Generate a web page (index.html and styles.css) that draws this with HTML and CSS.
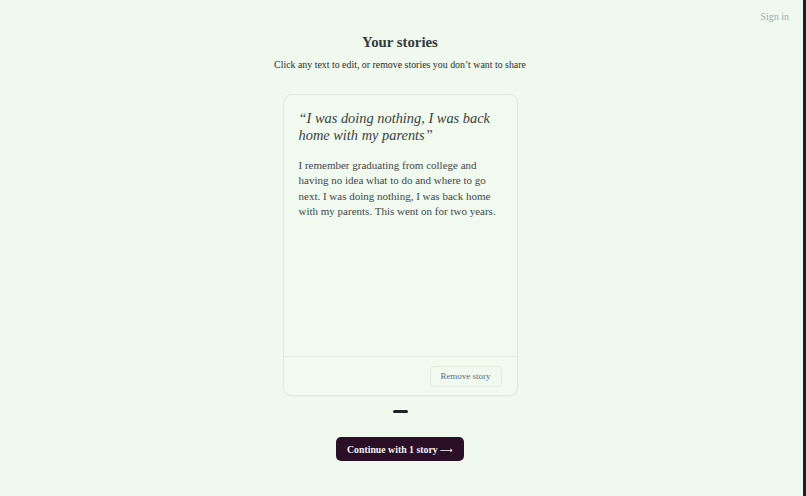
FILE: index.html
```html
<!DOCTYPE html>
<html lang="en">
<head>
<meta charset="utf-8">
<title>Your stories</title>
<link rel="stylesheet" href="styles.css">
</head>
<body>
<div class="page">
  <header class="topbar">
    <a class="signin" href="#">Sign in</a>
  </header>
  <main class="main">
    <h1 class="title">Your stories</h1>
    <p class="subtitle">Click any text to edit, or remove stories you don’t want to share</p>
    <section class="card">
      <div class="card-body">
        <h2 class="quote">“I was doing nothing, I was back home with my parents”</h2>
        <p class="story">I remember graduating from college and having no idea what to do and where to go next. I was doing nothing, I was back home with my parents. This went on for two years.</p>
      </div>
      <div class="card-footer">
        <button class="remove">Remove story</button>
      </div>
    </section>
    <div class="dots"><span class="dot"></span></div>
    <button class="continue">Continue with 1 story <span class="arrow">⟶</span></button>
  </main>
</div>
</body>
</html>
```
FILE: styles.css
```css
* { box-sizing: border-box; }
html, body { margin: 0; padding: 0; }
body {
  background: #eff9ee;
  font-family: "Liberation Serif", "DejaVu Serif", serif;
  color: #2f3437;
  height: 496px;
  overflow: hidden;
}
.page {
  height: 496px;
  border-right: 3px solid #1c1f2e;
  display: flex;
  flex-direction: column;
}
.topbar {
  display: flex;
  justify-content: flex-end;
  padding: 11px 14px 0 0;
  height: 26px;
}
.signin {
  font-size: 10px;
  color: #a0abbf;
  text-decoration: none;
}
.main {
  display: flex;
  flex-direction: column;
  align-items: center;
  padding-right: 3px;
}
.title {
  margin: 8px 0 0;
  font-size: 14.8px;
  font-weight: 700;
  color: #343b3b;
}
.subtitle {
  margin: 8px 0 0;
  font-size: 9.9px;
  color: #2b2f31;
}
.card {
  margin-top: 24px;
  width: 235px;
  height: 302px;
  border: 1px solid #e0eadf;
  border-radius: 9px;
  background: #f0faef;
  display: flex;
  flex-direction: column;
  box-shadow: 0 1px 2px rgba(0,0,0,0.03);
}
.card-body {
  flex: 1;
  padding: 15px 15px;
}
.quote {
  margin: 0;
  font-style: italic;
  font-weight: 400;
  font-size: 14.4px;
  line-height: 17px;
  color: #3a3f42;
}
.story {
  margin: 14px 0 0;
  font-size: 11px;
  line-height: 15.3px;
  color: #43484b;
}
.card-footer {
  border-top: 1px solid #e3ece2;
  height: 39px;
  display: flex;
  justify-content: flex-end;
  align-items: center;
  padding-right: 15px;
}
.remove {
  font-family: inherit;
  font-size: 9px;
  color: #5b6b87;
  background: transparent;
  border: 1px solid #e2ebe2;
  border-radius: 4px;
  height: 21px;
  width: 72px;
  padding: 0;
}
.dots {
  margin-top: 14px;
  height: 3px;
  display: flex;
}
.dot {
  width: 15px;
  height: 3px;
  border-radius: 2px;
  background: #22202a;
}
.continue {
  margin-top: 24px;
  font-family: inherit;
  font-size: 9.8px;
  font-weight: 700;
  color: #f5eef4;
  background: #2a0f26;
  border: none;
  border-radius: 5px;
  width: 128px;
  height: 24px;
}
.arrow {
  font-family: "DejaVu Sans", sans-serif;
  font-weight: 400;
  font-size: 9px;
}
```
